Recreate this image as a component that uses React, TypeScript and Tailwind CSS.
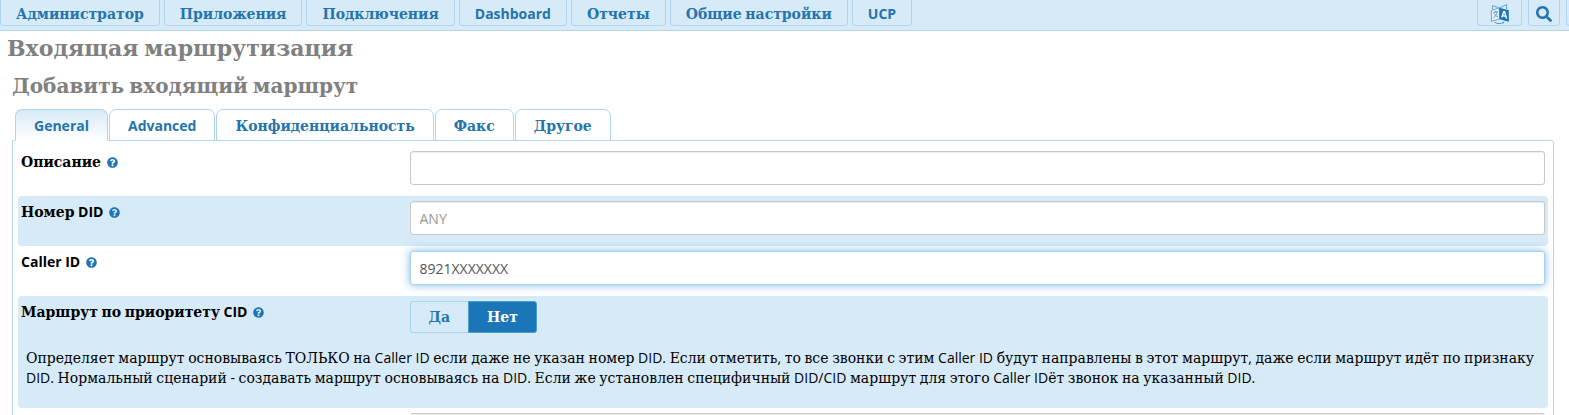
import { useState } from 'react';
import type { ReactNode } from 'react';
import { FaQuestionCircle, FaSearch } from 'react-icons/fa';

const MENU = ['Администратор', 'Приложения', 'Подключения', 'Dashboard', 'Отчеты', 'Общие настройки', 'UCP'];
const TABS = ['General', 'Advanced', 'Конфиденциальность', 'Факс', 'Другое'];

const CID_HELP =
  'Определяет маршрут основываясь ТОЛЬКО на Caller ID если даже не указан номер DID. Если отметить, то все звонки с этим Caller ID будут направлены в этот маршрут, даже если маршрут идёт по признаку DID. Нормальный сценарий - создавать маршрут основываясь на DID. Если же установлен специфичный DID/CID маршрут для этого Caller IDёт звонок на указанный DID.';

// Cyrillic runs are set in the serif face, everything else stays in Open Sans
function Mixed({ text }: { text: string }) {
  return (
    <>
      {text.split(/([а-яёА-ЯЁ]+)/).map((part, i) =>
        i % 2 ? <span key={i} className="font-['DejaVu_Serif',serif]">{part}</span> : part
      )}
    </>
  );
}

function TranslateIcon() {
  return (
    <svg viewBox="0 0 20 20" className="w-5 h-5" aria-hidden="true">
      {/* back sheet */}
      <path d="M2.6 5V1.6L9.4 4 16.6.6V5" fill="none" stroke="#4a90c2" strokeWidth=".8" />
      {/* left page */}
      <path d="M9.4 4 1.4 6.4v11L9.4 15z" fill="#e8f4fc" stroke="#4a90c2" strokeWidth=".8" />
      <path d="m3.2 8.8 4.6-1.2M5.2 6.8l.4 1.4M7 8c-.4 2.4-1.6 4.6-3.6 6M4 9.6c.8 1.6 2 2.6 3.8 3" fill="none" stroke="#4a90c2" strokeWidth=".9" />
      {/* right page */}
      <path d="M9.4 3.8 18.8 6.2v11.6L9.4 15.2z" fill="#1a74b5" />
      <path d="m11.8 13.4 1.9-5.6h.9l2 6.8M12.6 11.6l3.2.7" fill="none" stroke="#fff" strokeWidth="1.4" />
      <path d="M4.6 18.2c2.6 1.8 6.2 2 9.2.2" fill="none" stroke="#4a90c2" strokeWidth=".9" />
      <path d="m12.2 18.2 2.2-.4-.6 1.8z" fill="#4a90c2" />
    </svg>
  );
}

function Row({ id, label, shaded, help, children }: {
  id: string;
  label: string;
  shaded?: boolean;
  help?: string;
  children: ReactNode;
}) {
  return (
    <div className={`rounded px-[3px] pt-[5px] ${shaded ? 'bg-[#d7eaf8]' : ''}`}>
      <div className="grid grid-cols-[1fr_3fr] gap-[10px] h-[45px]">
        <div className="flex items-center gap-[6px] h-[22px] font-bold text-black">
          <label id={`${id}-label`} htmlFor={id}><Mixed text={label} /></label>
          <FaQuestionCircle className="w-[11px] h-[11px] text-[#1f75b5]" />
        </div>
        {children}
      </div>
      {help && (
        <p className="px-[5px] pt-[2px] pb-5 text-black leading-5"><Mixed text={help} /></p>
      )}
    </div>
  );
}

const inputClass =
  'w-full h-[34px] px-[9px] rounded-[3px] border border-[#c8c8c8] bg-white text-[#555] placeholder:text-[#999] outline-none shadow-[inset_0_1px_1px_rgba(0,0,0,0.075)]';

export default function App() {
  const [tab, setTab] = useState('General');
  const [callerId, setCallerId] = useState('8921XXXXXXX');
  const [priority, setPriority] = useState(false);

  return (
    <div className="h-screen overflow-hidden bg-white font-['Open_Sans',sans-serif] text-[14px] leading-5">
      <nav className="flex h-[31px] overflow-hidden border-b border-[#b0d4ec] bg-[#d7eaf8] font-bold text-[#2474ae]">
        <div className="flex gap-1">
          {MENU.map((item) => (
            <button key={item} className="h-[26px] px-[15px] pt-[2px] border border-t-0 border-[#b0d4ec] rounded-b-[4px] whitespace-nowrap">
              <Mixed text={item} />
            </button>
          ))}
        </div>
        <div className="ml-auto -mr-[29px] flex gap-[6px]">
          <button aria-label="Язык" className="flex w-[45px] h-[26px] pt-[2px] items-center justify-center border border-t-0 border-[#b0d4ec] rounded-b-[4px]">
            <TranslateIcon />
          </button>
          <button aria-label="Поиск" className="flex w-8 h-[26px] pt-[2px] items-center justify-center border border-t-0 border-[#b0d4ec] rounded-b-[4px]">
            <FaSearch className="w-4 h-4" />
          </button>
          <button aria-label="Меню" className="w-8 h-[26px] border border-t-0 border-[#b0d4ec] rounded-b-[4px]" />
        </div>
      </nav>

      <h1 className="px-[7px] pt-[2px] text-[22px] leading-7 font-bold text-[#808080]"><Mixed text="Входящая маршрутизация" /></h1>

      <main className="pl-3 pr-[15px]">
        <h2 className="pt-2 text-[20px] leading-8 font-bold text-[#808080]"><Mixed text="Добавить входящий маршрут" /></h2>

        <div role="tablist" className="flex gap-px pl-[3px] pt-[7px] -mb-px relative">
          {TABS.map((t) => (
            <button
              key={t}
              role="tab"
              aria-selected={t === tab}
              onClick={() => setTab(t)}
              className={`h-8 px-[18px] pt-[2px] rounded-t-[7px] border border-[#b0d4ec] font-bold text-[#2474ae] whitespace-nowrap ${
                t === tab ? 'border-b-white bg-linear-to-b from-[#d7eaf8] to-white' : 'bg-white'
              }`}
            >
              <Mixed text={t} />
            </button>
          ))}
        </div>

        <section className="border border-[#b9d6e6] rounded-tr-[3px] p-[5px]">
          <Row id="description" label="Описание">
            <input id="description" className={inputClass} />
          </Row>
          <Row id="did" label="Номер DID" shaded>
            <input id="did" placeholder="ANY" className={inputClass} />
          </Row>
          <Row id="cid" label="Caller ID">
            <input
              id="cid"
              value={callerId}
              onChange={(e) => setCallerId(e.target.value)}
              className="w-full h-[34px] px-[9px] rounded-[3px] border border-[#a9d2ef] bg-white text-[#555] outline-none shadow-[0_0_8px_rgba(64,152,212,0.7)]"
            />
          </Row>
          <Row id="priority" label="Маршрут по приоритету CID" shaded help={CID_HELP}>
            <div id="priority" role="group" aria-labelledby="priority-label" className="flex h-8 font-bold">
              <button
                aria-pressed={priority}
                onClick={() => setPriority(true)}
                className={`px-[18px] border border-r-0 border-[#a9d2ef] rounded-l-[3px] ${priority ? 'bg-[#1a76b7] text-white' : 'text-[#2474ae]'}`}
              >
                <Mixed text="Да" />
              </button>
              <button
                aria-pressed={!priority}
                onClick={() => setPriority(false)}
                className={`px-[18px] border border-[#4a9fd6] rounded-r-[3px] ${priority ? 'text-[#2474ae]' : 'bg-[#1a76b7] text-white'}`}
              >
                <Mixed text="Нет" />
              </button>
            </div>
          </Row>
          <div className="grid grid-cols-[1fr_3fr] gap-[10px] px-[3px] pt-[5px]">
            <span />
            <select aria-label="Музыка" className="w-full h-[34px] rounded-[3px] border border-[#c8c8c8] bg-[#f0f0f0] appearance-none" />
          </div>
        </section>
      </main>
    </div>
  );
}
